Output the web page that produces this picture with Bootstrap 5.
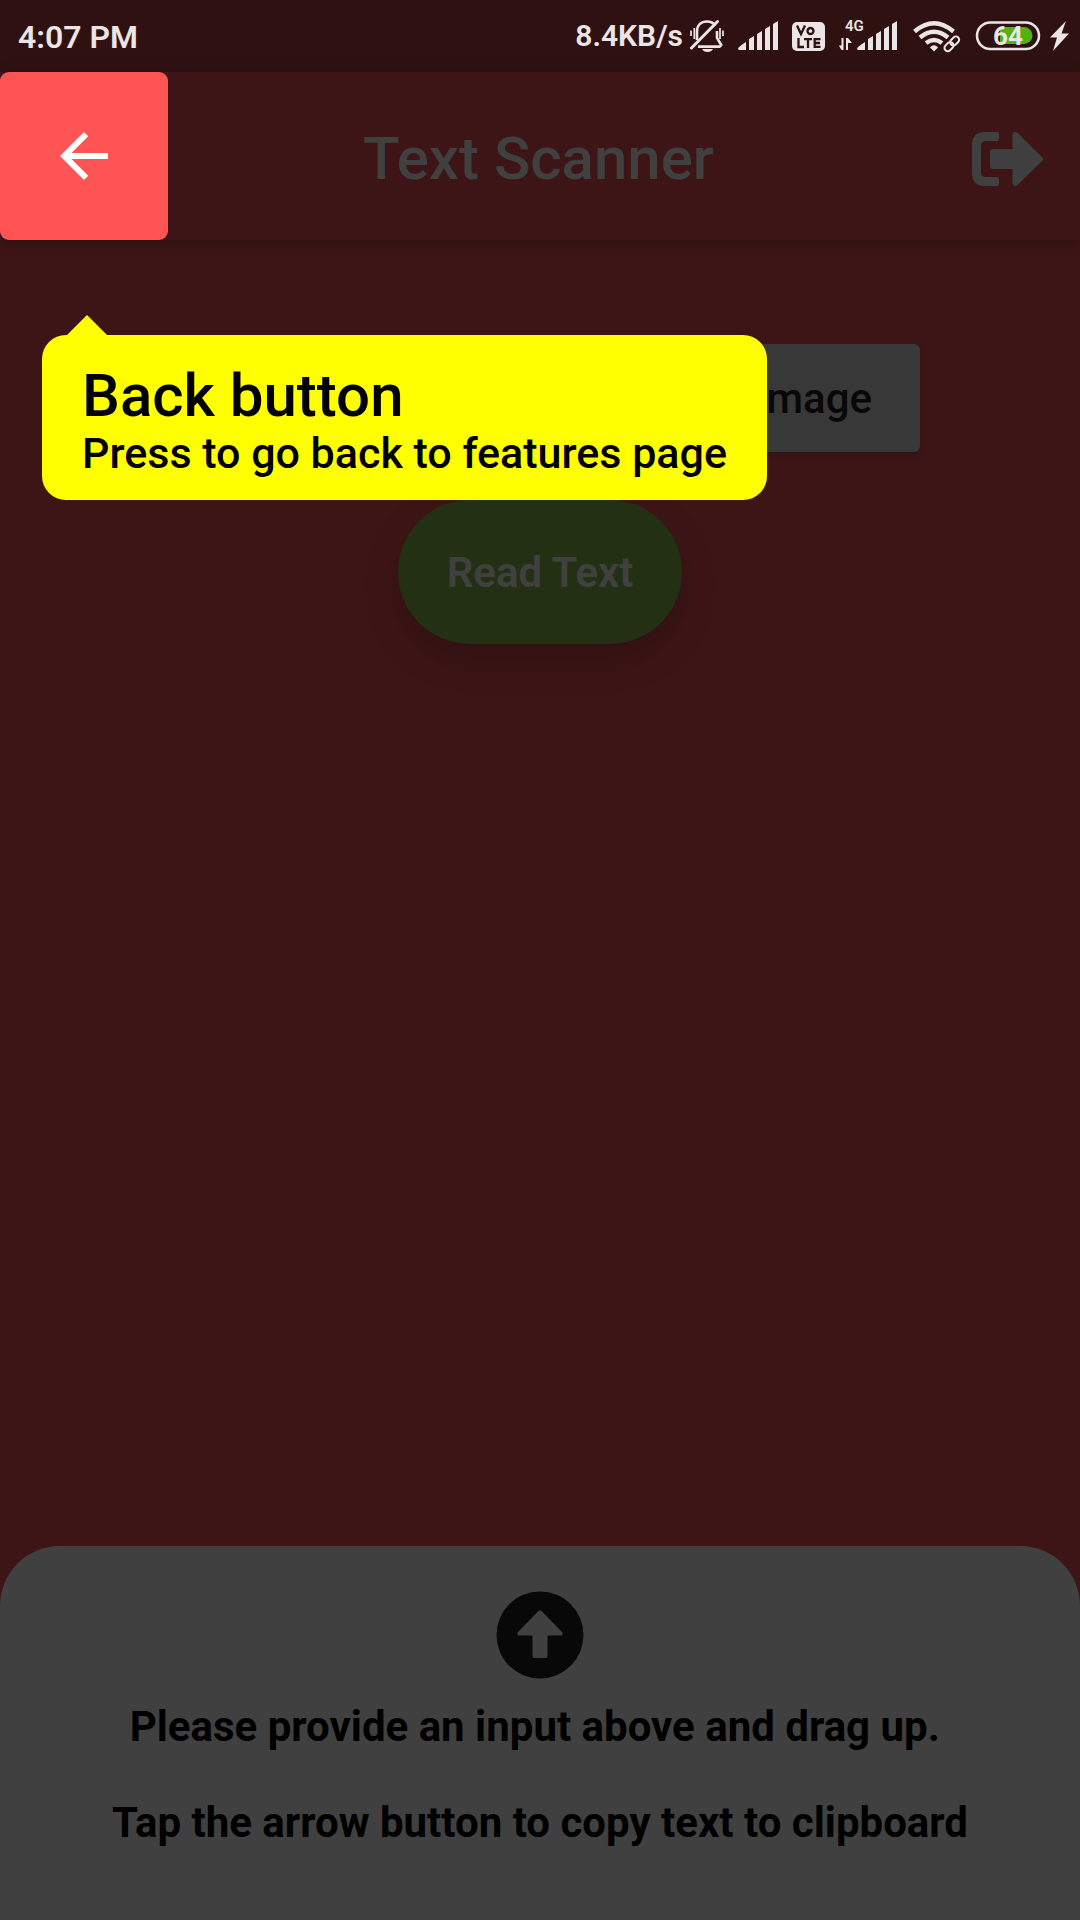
<!DOCTYPE html>
<html lang="en">
<head>
<meta charset="utf-8">
<meta name="viewport" content="width=device-width, initial-scale=1">
<title>Text Scanner</title>
<link href="https://cdn.jsdelivr.net/npm/bootstrap@5.3.0/dist/css/bootstrap.min.css" rel="stylesheet">
<style>
  body { font-family: Roboto, "Noto Sans", sans-serif; background: #3e1516; color: #000; }
  svg { display: block; }
  .status-strip { height: 72px; padding: 0 11px 0 18px; background: #2f1112; color: #ebe6e5; font-size: 32px; font-weight: 600; line-height: 74px; }
  .status-strip .net-speed { font-size: 30px; margin-right: 7px; }
  .status-icons { gap: 14px; }
  .app-header { height: 168px; box-shadow: 0 3px 12px rgba(0, 0, 0, .3); }
  .back-btn { width: 168px; border-radius: 9px; background: #ff5454; }
  .app-title { padding-top: 5px; font-size: 60px; line-height: 72px; font-weight: 500; color: #404040; }
  .exit-slot { width: 171px; padding: 5px 36px 0 0; }
  .image-row { padding: 104px 160px 0; }
  .image-btn { padding: 2px 48px 0; font-size: 42px; line-height: 106px; font-weight: 500; color: #080808; background: #383838; border-radius: 6px; box-shadow: 0 3px 6px rgba(0, 0, 0, .2); }
  .read-row { padding-top: 48px; }
  .read-btn { padding: 2px 49px 0; font-size: 42px; line-height: 142px; font-weight: 600; color: #404040; background: #243014; border-radius: 72px; box-shadow: 0 15px 36px rgba(0, 0, 0, .22); }
  .coach-tip { top: 95px; left: 42px; padding: 27px 40px 23px; background: #ff0; border-radius: 24px; white-space: nowrap; }
  .coach-tip::before { content: ""; position: absolute; left: 25px; bottom: 100%; border: 20px solid transparent; border-top: 0; border-bottom-color: #ff0; }
  .coach-title { font-size: 60px; line-height: 67px; font-weight: 500; }
  .coach-text { font-size: 43px; line-height: 48px; font-weight: 500; }
  .result-sheet { padding: 45px 24px 73px; background: #404040; border-radius: 60px 60px 0 0; }
  .sheet-text { margin-top: 24px; font-size: 42px; line-height: 48px; font-weight: 700; }
  .sheet-text + .sheet-text { margin-top: 48px; }
</style>
</head>
<body class="d-flex flex-column min-vh-100">
  <div class="status-strip d-flex justify-content-between">
    <span>4:07 PM</span>
    <div class="d-flex align-items-center">
      <span class="net-speed">8.4KB/s</span>
      <div class="status-icons d-flex">
        <svg width="34" height="72" viewBox="690 0 34 72" fill="none" stroke="#ebe6e5" stroke-width="2.6" aria-label="Silent">
          <path d="M697 40V31.500C697 25 701 21.500 707 21.500C711 21.500 713.500 23 715.500 25.500M717 31V38L721.500 45.500"/>
          <path d="M691.500 48L717.500 21.500" stroke-width="3" stroke-linecap="round"/>
          <path d="M698 45.300H723L720 48H698Z" fill="#ebe6e5" stroke="none"/>
          <path d="M702 49H713Q711.500 52 707.500 52Q703.500 52 702 49Z" fill="#ebe6e5" stroke="none"/>
          <path d="M691 30.500V36M694.300 28V39M720 28V39M723 30.500V36" stroke-width="1.700"/>
        </svg>
        <svg width="40" height="72" viewBox="738 0 40 72" fill="#ebe6e5" aria-label="Signal">
          <path d="M738 49Q738 47 746 42V50H739ZM749 39L754 36V50H749ZM757 34L762 31V50H757ZM765 29L770 26V50H765ZM773 24L778 21V50H773Z"/>
        </svg>
        <svg width="33" height="72" viewBox="792 0 33 72" aria-label="VoLTE">
          <rect x="792" y="22" width="33" height="29" rx="5" fill="#ebe6e5"/>
          <g fill="none" stroke="#2f1112" stroke-width="2.300">
            <path d="M797 25.500L801 34L805 25.500M798.500 38V47H804M804 39.100H812M808 39.100V48M820.500 39.100H814.700V46.800H820.500M814.700 43H820"/>
            <circle cx="810.500" cy="31" r="3"/>
          </g>
        </svg>
        <svg width="58" height="72" viewBox="839 0 58 72" fill="#ebe6e5" aria-label="4G signal">
          <text x="845" y="31" font-family="Roboto, sans-serif" font-size="15" font-weight="600">4G</text>
          <path d="M841.500 38H843.500V50H841.500L838.800 45.500H841.500ZM846 50V38H848L852 43H848V50Z"/>
          <path d="M857 49Q857 47 865 42V50H858ZM868 39L873 36V50H868ZM876 34L881 31V50H876ZM884 29L889 26V50H884ZM892 24L897 21V50H892Z"/>
        </svg>
        <svg width="50" height="72" viewBox="911 0 50 72" fill="none" stroke="#ebe6e5" stroke-width="4.500" aria-label="Wi-Fi">
          <path d="M914.500 31.500Q934 15 953.500 31.500M920 37.500Q934 26 948 37.500M926 43Q934 37 942 43"/>
          <path d="M934 51.500L930 47.500Q934 43 938 47.500Z" fill="#ebe6e5" stroke="none"/>
          <g stroke-width="2" transform="rotate(-45 952 44)">
            <rect x="943" y="40.500" width="10" height="6.500" rx="3.200"/>
            <rect x="951" y="40.500" width="10" height="6.500" rx="3.200"/>
          </g>
        </svg>
        <svg width="94" height="72" viewBox="975 0 94 72" aria-label="Battery 64 percent, charging">
          <rect x="977" y="22.500" width="62" height="26.500" rx="13.200" fill="none" stroke="#ebe6e5" stroke-width="2.500"/>
          <path d="M1000 27H1024A8.500 8.500 0 0 1 1024 44H1000Z" fill="#51b212"/>
          <text x="993" y="45" font-family="Roboto, sans-serif" font-size="26" font-weight="700" fill="#ebe6e5">64</text>
          <path d="M1066 21L1050 37.500H1057L1053 51L1069 33.500H1061.500Z" fill="#ebe6e5"/>
        </svg>
      </div>
    </div>
  </div>

  <header class="app-header d-flex align-items-stretch justify-content-between">
    <button type="button" class="back-btn btn border-0 p-0 d-flex align-items-center justify-content-center" aria-label="Back">
      <svg width="72" height="72" viewBox="0 0 24 24" fill="#fff"><path d="M20 11H7.830l5.590-5.590L12 4l-8 8 8 8 1.410-1.410L7.830 13H20v-2z"/></svg>
    </button>
    <h1 class="app-title m-0 align-self-center">Text Scanner</h1>
    <div class="exit-slot d-flex align-items-center justify-content-end">
      <a href="#" aria-label="Sign out">
        <svg width="72" height="54" viewBox="0 0 72 54" fill="#404040">
          <path d="M13 0H25Q27 0 27 2V7Q27 9 25 9H14Q9 9 9 14V40Q9 45 14 45H25Q27 45 27 47V52Q27 54 25 54H13Q0 54 0 41V13Q0 0 13 0Z"/>
          <path d="M21 17H40.500V3C40.500 0 44 -1 46 1.500L70 25Q72 27 70 29L46 52.500C44 55 40.500 54 40.500 51V37H21Q18 37 18 34V20Q18 17 21 17Z"/>
        </svg>
      </a>
    </div>
  </header>

  <main class="flex-grow-1 position-relative">
    <div class="image-row d-flex justify-content-end">
      <button type="button" class="image-btn btn border-0">Image</button>
    </div>
    <div class="read-row d-flex justify-content-center">
      <button type="button" class="read-btn btn border-0">Read Text</button>
    </div>
    <div class="coach-tip position-absolute" role="tooltip">
      <div class="coach-title">Back button</div>
      <div class="coach-text">Press to go back to features page</div>
    </div>
  </main>

  <section class="result-sheet d-flex flex-column align-items-center text-center">
    <button type="button" class="btn border-0 p-0" aria-label="Copy text to clipboard">
      <svg width="88" height="88" viewBox="0 0 88 88">
        <circle cx="44" cy="44" r="43.500" fill="#080808"/>
        <path d="M42 20.500Q44 18.500 46 20.500L66 41Q67.500 44 65 44.500H51.500V65Q51.500 67 49.500 67H38.500Q36.500 67 36.500 65V44.500H23Q20.500 44 22 41Z" fill="#404040"/>
      </svg>
    </button>
    <p class="sheet-text mb-0">Please provide an input above and drag up.&nbsp;</p>
    <p class="sheet-text mb-0">Tap the arrow button to copy text to clipboard</p>
  </section>
<script src="https://cdn.jsdelivr.net/npm/bootstrap@5.3.0/dist/js/bootstrap.bundle.min.js"></script>
</body>
</html>
